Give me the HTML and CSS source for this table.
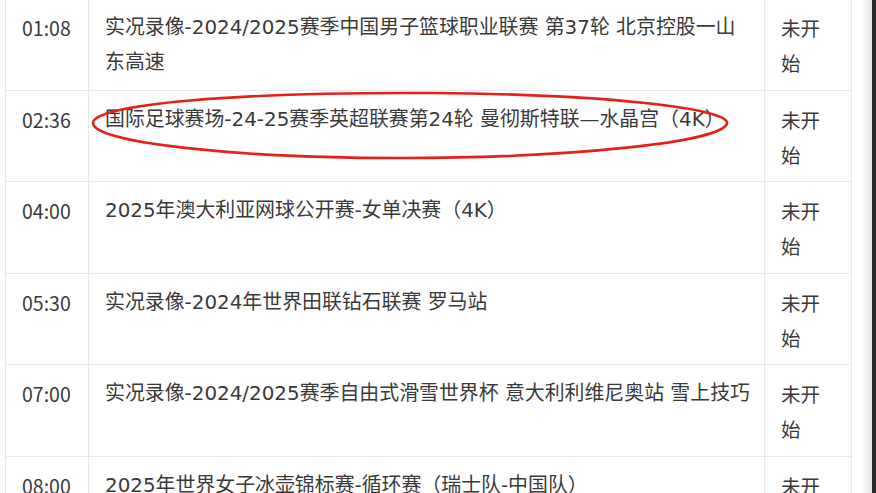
FILE: index.html
```html
<!DOCTYPE html>
<html lang="zh-CN">
<head>
<meta charset="utf-8">
<title>节目表</title>
<link rel="stylesheet" href="styles.css">
</head>
<body>
<div class="screen">
  <div class="main">
    <table class="schedule">
      <colgroup>
        <col class="c-time">
        <col class="c-title">
        <col class="c-status">
      </colgroup>
      <tbody>
        <tr>
          <td class="time">01:08</td>
          <td class="title">实况录像-2024/2025赛季中国男子篮球职业联赛 第37轮 北京控股一山东高速</td>
          <td class="status">未开始</td>
        </tr>
        <tr>
          <td class="time">02:36</td>
          <td class="title">国际足球赛场-24-25赛季英超联赛第24轮 曼彻斯特联—水晶宫（4K）</td>
          <td class="status">未开始</td>
        </tr>
        <tr>
          <td class="time">04:00</td>
          <td class="title">2025年澳大利亚网球公开赛-女单决赛（4K）</td>
          <td class="status">未开始</td>
        </tr>
        <tr>
          <td class="time">05:30</td>
          <td class="title">实况录像-2024年世界田联钻石联赛 罗马站</td>
          <td class="status">未开始</td>
        </tr>
        <tr>
          <td class="time">07:00</td>
          <td class="title">实况录像-2024/2025赛季自由式滑雪世界杯 意大利利维尼奥站 雪上技巧</td>
          <td class="status">未开始</td>
        </tr>
        <tr>
          <td class="time">08:00</td>
          <td class="title">2025年世界女子冰壶锦标赛-循环赛（瑞士队-中国队）</td>
          <td class="status">未开始</td>
        </tr>
      </tbody>
    </table>
  </div>
  <div class="edge"></div>
  <div class="frame"></div>
  <svg class="mark" width="876" height="493" viewBox="0 0 876 493" aria-hidden="true">
    <path d="M 430 93 C 600 94, 728 108, 727 123 C 725 142, 570 158, 400 158 C 230 158, 93 142, 93 123 C 93 104, 240 92, 430 93 Z" fill="none" stroke="#e3201b" stroke-width="2.6"/>
  </svg>
</div>
</body>
</html>
```

FILE: styles.css
```css
html, body {
  margin: 0;
  padding: 0;
  background: #ffffff;
}

.screen {
  position: relative;
  width: 876px;
  height: 493px;
  overflow: hidden;
  display: flex;
}

.main {
  flex: 0 0 862px;
  padding-left: 5px;
  box-sizing: border-box;
}

.edge {
  flex: 0 0 10px;
  background: linear-gradient(to right, #ffffff, #e2e2e2);
}

.frame {
  flex: 0 0 4px;
  background: #2a2a2a;
}

.schedule {
  margin-top: -2px;
  width: 846px;
  border-collapse: collapse;
  table-layout: fixed;
  font-family: "Noto Sans CJK SC", "Noto Sans", sans-serif;
  font-size: 19.5px;
  line-height: 35.25px;
  color: #3a3a3a;
  border: 1px solid #e8e8e8;
}

.c-time { width: 83px; }
.c-title { width: 676px; }
.c-status { width: 87px; }

.schedule td {
  border: 1px solid #e8e8e8;
  padding: 11px 16px 9px 16px;
  vertical-align: top;
  box-sizing: border-box;
}

.schedule .time {
  padding-left: 16px;
  padding-right: 8px;
}

.schedule .title {
  font-family: "DejaVu Sans", "Noto Sans CJK SC", sans-serif;
  font-size: 19.9px;
  padding-right: 10px;
}

.schedule .status {
  padding-right: 14px;
}

.mark {
  position: absolute;
  left: 0;
  top: 0;
  pointer-events: none;
}
```
